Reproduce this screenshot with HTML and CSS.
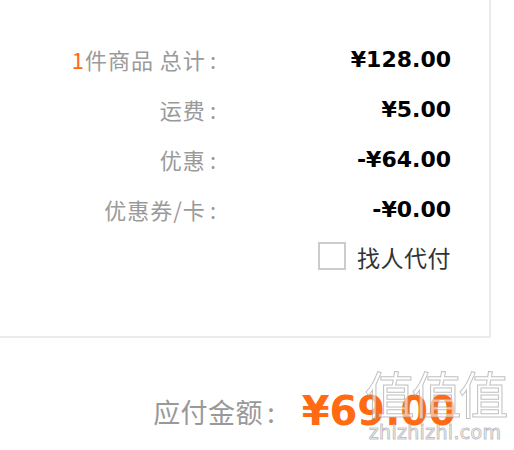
FILE: index.html
```html
<!DOCTYPE html>
<html lang="zh-CN">
<head>
<meta charset="utf-8">
<title>订单结算</title>
<link rel="stylesheet" href="styles.css">
</head>
<body>
<div class="page">
  <section class="card">
    <div class="row">
      <div class="label"><span class="count">1</span>件商品 总计<span class="colon">:</span></div>
      <div class="value">¥128.00</div>
    </div>
    <div class="row">
      <div class="label">运费<span class="colon">:</span></div>
      <div class="value">¥5.00</div>
    </div>
    <div class="row">
      <div class="label">优惠<span class="colon">:</span></div>
      <div class="value">-¥64.00</div>
    </div>
    <div class="row">
      <div class="label">优惠券/卡<span class="colon">:</span></div>
      <div class="value">-¥0.00</div>
    </div>
    <div class="row">
      <div class="label"></div>
      <label class="proxy"><span class="checkbox"></span><span class="proxy-text">找人代付</span></label>
    </div>
  </section>
  <div class="total">
    <span class="total-label">应付金额<span class="colon">:</span></span>
    <span class="total-value">¥69.00</span>
  </div>
  <div class="watermark">
    <div class="wm-big">值值值</div>
    <div class="wm-small">zhizhizhi.com</div>
  </div>
</div>
</body>
</html>
```

FILE: styles.css
```css
html, body {
  margin: 0;
  padding: 0;
  background: #ffffff;
}

.page {
  position: relative;
  width: 514px;
  height: 450px;
  overflow: hidden;
  font-family: "Noto Sans CJK SC", "DejaVu Sans", sans-serif;
}

.card {
  width: 489px;
  box-sizing: content-box;
  margin-top: -34px;
  padding-top: 68px;
  height: 302px;
  border-right: 2px solid #ebebeb;
  border-bottom: 2px solid #ebebeb;
}

.row {
  display: flex;
  align-items: center;
  height: 50px;
}

.label {
  width: 216px;
  text-align: right;
  font-size: 22px;
  color: #9a9a9a;
  letter-spacing: 1px;
  white-space: nowrap;
}

.colon {
  margin-left: 4px;
  letter-spacing: 0;
}

.count {
  color: #ff6a13;
  margin-right: 0;
}

.value {
  flex: 1;
  text-align: right;
  padding-right: 38px;
  font-family: "DejaVu Sans", sans-serif;
  font-weight: bold;
  font-size: 22px;
  color: #000000;
}

.proxy {
  flex: 1;
  display: flex;
  justify-content: flex-end;
  align-items: center;
  padding-right: 38px;
  gap: 11px;
  margin-top: -5px;
}

.checkbox {
  width: 24px;
  height: 24px;
  border: 2px solid #cccccc;
  background: #ffffff;
  margin-top: -2px;
}

.proxy-text {
  font-size: 23px;
  color: #333333;
  letter-spacing: 0.5px;
}

.total {
  display: flex;
  justify-content: flex-end;
  align-items: center;
  height: 50px;
  margin-top: 48px;
  padding-right: 58px;
}

.total-label {
  font-size: 27px;
  color: #999999;
  letter-spacing: 0.5px;
  margin-right: 27px;
}

.total-value {
  font-family: "DejaVu Sans", sans-serif;
  font-weight: bold;
  font-size: 40px;
  color: #ff6a13;
}

.watermark {
  position: absolute;
  left: 362px;
  top: 362px;
  width: 146px;
  text-align: center;
  pointer-events: none;
}

.wm-big {
  font-size: 50px;
  line-height: 60px;
  color: rgba(255, 255, 255, 0.55);
  -webkit-text-stroke: 1px rgba(150, 150, 150, 0.6);
  letter-spacing: -3px;
}

.wm-small {
  font-family: "DejaVu Sans", sans-serif;
  font-size: 19px;
  line-height: 20px;
  letter-spacing: 0.3px;
  color: rgba(255, 255, 255, 0.6);
  -webkit-text-stroke: 1px rgba(150, 150, 150, 0.6);
}
```
